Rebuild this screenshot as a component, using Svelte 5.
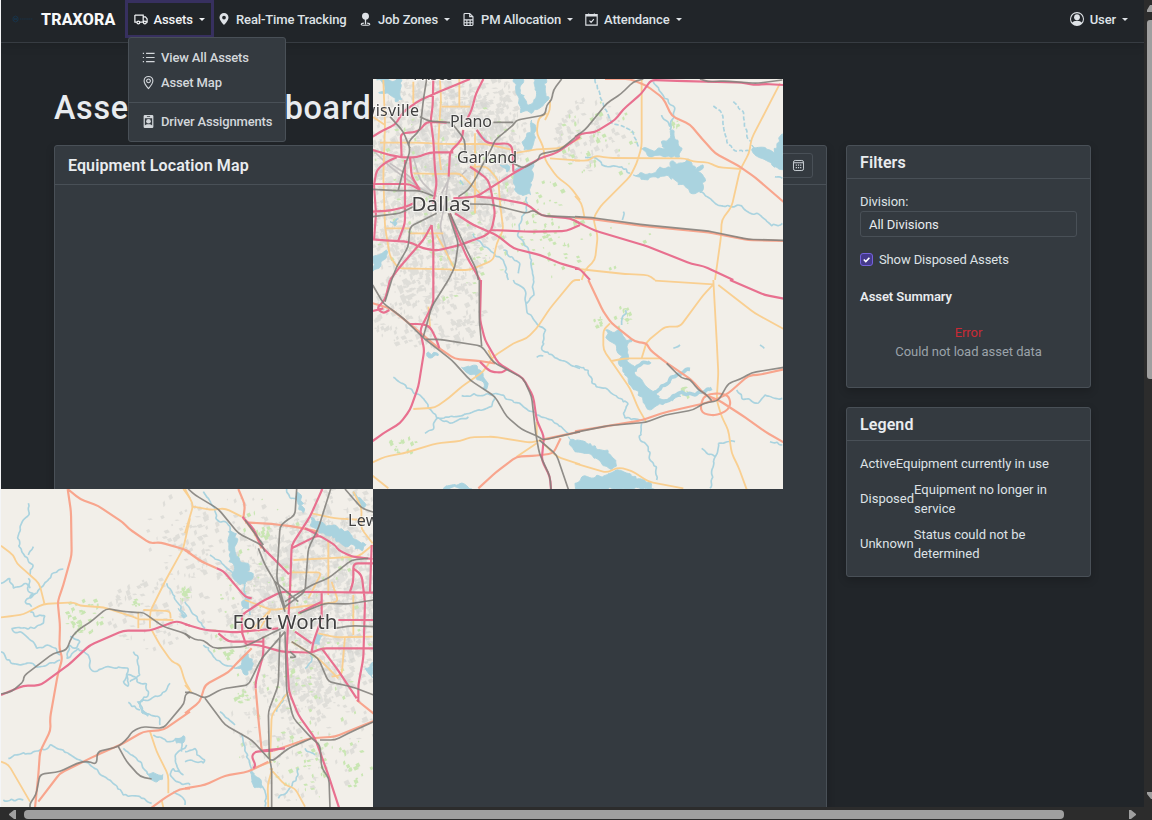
<script>
  const icons = {
    truck: 'M1 3.5h9.5v8H6.8M3.2 11.5H1v-8M10.5 5.5h2.6L15 8v3.5h-1M10.5 11.5h.3M3.4 12a1.6 1.6 0 1 0 3.2 0a1.6 1.6 0 1 0-3.2 0M10.8 12a1.6 1.6 0 1 0 3.2 0a1.6 1.6 0 1 0-3.2 0',
    list: 'M5 3h10.5M5 8h10.5M5 13h10.5M1 3h1.5M1 8h1.5M1 13h1.5',
    geo: 'M8 15.4C5 12 2.6 9 2.6 6a5.4 5.4 0 0 1 10.8 0C13.4 9 11 12 8 15.4ZM5.7 6a2.3 2.3 0 1 0 4.6 0a2.3 2.3 0 1 0-4.6 0',
    calendar: 'M1 2h14v13H1zM1 3.5h14M4.5 .5v2M11.5 .5v2M5.5 9.5l2 2 3.4-4'
  };

  const nav = [
    { id: 'track', label: 'Real-Time Tracking', caret: false },
    { id: 'job', label: 'Job Zones', caret: true },
    { id: 'pm', label: 'PM Allocation', caret: true },
    { id: 'att', label: 'Attendance', caret: true }
  ];

  const legend = [
    ['Active', ['Equipment currently in use']],
    ['Disposed', ['Equipment no longer in', 'service']],
    ['Unknown', ['Status could not be', 'determined']]
  ];

  // Each sheet is drawn at three units to the pixel from its own origin.
  const dallas = [
    {
      x: -3, y: -9,
      water: 'M20 30L98 30 90 60 97 90 75 97 60 75 25 68 45 50ZM432 27L462 27 452 60 470 100 490 100 495 60 490 27 530 27 525 60 537 80 515 110 490 125 450 130 445 100 438 70ZM485 150L497 170 485 235 462 242 455 215 470 200ZM435 300L455 295 490 278 480 340 482 375 445 372 430 340ZM8 560L50 540 40 570 10 605ZM60 455L85 445 75 470ZM390 285L420 290 410 308Z',
      stream: 'M470 380V420L455 440 445 500 470 530 485 570 490 630M310 490L340 530 360 540 400 570 415 630M400 540L450 580 445 610M325 190L370 230M270 330L280 345',
      primary: 'M130 35V100M40 30L45 160 40 320 45 470 60 560 85 595 245 598M30 218L140 218 240 222 350 222 430 240M210 27L213 90 208 160 205 230 213 300M268 27V110M215 110H300M315 190V430M130 310L210 312 270 310 330 370M300 290L350 290 385 330 390 400 400 480 380 520 370 570 300 600 240 600M200 495L225 540 255 600M530 130L505 145 500 190 520 230 525 270 560 320 600 350 630 390M430 250L500 238 570 235 630 205M540 265L630 272M45 475H120M120 490H220M8 140L45 165M540 90V120L525 150',
      trunk: '',
      motorway: 'M8 342L120 342 150 360M190 27L188 110 182 150 190 210 195 300 200 340 190 400M185 465L190 520V630M340 27L318 70 305 120 290 150M280 180L275 210 240 245 236 320M300 27L220 60 150 90 100 125 75 165 40 180 8 200M8 240L60 255 95 262 140 262 180 247 250 247M95 262L92 190 130 187 150 180 170 155 230 158M320 180L345 215 370 222 415 220 428 235 430 305M8 425L60 422 110 410 130 400M12 345L20 300 50 275 80 262M12 345L18 430 12 510M8 508L60 512 115 515 160 535 200 542 270 525 310 510 345 498 365 480 375 430 365 370 355 330 330 310 300 290M105 270V460L85 512M120 262L125 320 150 360M250 385L320 380 430 310 510 265 560 248 630 200M320 380L380 385 470 402 515 437 600 445 630 460M365 480L480 485 590 483 630 465M255 430L310 465 380 495 430 535 510 555 570 580 630 597M240 430L260 490 290 560 330 630M60 630L90 590 160 510 185 465',
      rail: 'M575 27L550 60 545 90 530 105 525 135 440 150 430 165 375 210 365 235 340 280 320 320 295 360 265 380M170 27L160 90 150 180 115 215 120 245 100 300 85 360M8 358L80 362 150 362 190 378M60 140L100 185 120 235M150 140L175 153 240 158M370 157H430M250 165L285 210V250M8 440L90 430 130 410M300 402L360 403 470 430 490 420 515 437 630 442M630 190L570 240 510 252 505 270 460 295 420 275M235 430L265 520 255 590 235 630M240 430L290 540 320 600 325 630M200 430L120 470 115 530 80 590 65 630',
      local: 'M8 240L60 290 120 335 190 378M150 360L120 320 60 280M240 320L215 370M236 320L225 400 210 470 235 560M130 262L150 330 200 380M270 320L290 300'
    },
    {
      x: 202, y: -9,
      water: 'M195 235L230 240 270 235 258 215 280 215 285 180 295 180 300 210 310 210 320 240 315 262 230 262 215 248ZM175 315L240 308 255 290 290 295 285 275 310 280 345 270 360 300 385 285 370 305 390 325 385 360 360 372 335 355 300 330 270 318 220 330ZM530 225L550 232 575 238 600 250 605 220 622 190 626 300 590 285 560 265 535 250Z',
      stream: 'M235 35L260 70 300 115 285 180M260 135L285 170M30 262H60L90 288 140 290 165 310M375 365L420 400 450 410 500 407 510 420 560 440 590 468 622 460M600 320L622 325M145 425L142 450',
      dashed: 'M60 27L75 80 110 160 170 180 190 230M415 108L440 130 455 215 480 243 525 243M475 95L505 125 515 200 530 215',
      primary: 'M200 30V230L185 280 165 320 75 410 55 445 68 500 60 570 30 600 20 630M0 272H40L60 257 100 264 330 265 355 275 400 277 430 292 500 297M615 40L530 205 522 250 495 300 470 410 440 450 438 500 420 630M0 378L20 400 28 440M10 597L150 612 220 615 240 630',
      trunk: 'M90 27H165L215 47 265 85 290 138 345 163 380 205 420 250 490 287 540 322 626 396M0 444L50 447 210 469 400 487 520 510 626 513',
      motorway: 'M0 203L20 190 60 187 120 150 145 118 200 70 228 30 320 33 500 38 540 45 570 42 626 45M0 453L60 482 220 530 350 582 385 588 475 630M0 597H15L45 630',
      rail: 'M0 200L30 180 95 100 140 70 175 35 205 27M375 27L400 35 450 33 545 40 622 30M0 440L50 443 210 465 400 483 520 508 626 511'
    },
    {
      x: -3, y: 201,
      water: 'M275 262L310 255 330 270 355 310 350 330 330 300ZM595 470L630 490 630 515 605 500ZM220 625L245 615 275 608 305 625ZM170 220L205 220 205 228 170 227Z',
      stream: 'M430 0L465 30 470 90 500 130 527 150 515 210 560 235 630 265M490 0L492 45 470 70M70 292L110 325 150 345 190 400 210 415 300 400 365 380 375 350M165 460L185 450 205 412 240 430 295 410M275 347L375 340 450 370 500 405 560 430 595 460M500 232L520 228',
      primary: 'M630 0H610L540 85 500 145 470 175 430 190 370 230 340 275 275 320 235 355 195 383 130 387M175 80L180 140M8 547L45 530 100 520 200 490 270 483 300 472 370 470 480 488 600 462M440 530L500 490M520 490L560 530 630 553M8 587L55 625M355 210L370 247M500 425V470',
      trunk: 'M8 70L60 85 130 140 200 200 255 237 330 243 375 250M325 625L380 575 440 530 500 527 550 520 572 475M520 478L630 455',
      motorway: 'M60 0L45 60 20 85 40 100 58 90M8 93L40 85M190 0V70L165 120 150 150 163 210 145 320 120 390 90 430 40 460 8 483M120 132H155L180 140 200 180 208 205M333 0L330 120 345 180 385 250 460 295 490 350 500 420 522 470 515 540 540 590 543 628M330 245L360 275 395 278 410 268',
      rail: 'M8 15L40 70 100 115 165 178 245 240 300 300 375 350 410 410 455 448 505 470 520 480 630 455M235 0L185 80 160 170M165 178H210L335 198 370 247 460 295 485 350 497 460 508 520 540 590 543 628M508 480L560 525 595 628M328 0V120L335 198M65 0L45 65'
    },
    {
      x: 202, y: 201,
      water: 'M92 150L140 155 150 175 172 185 155 200 160 225 155 240 170 255 185 290 200 298 215 320 270 360 300 345 320 350 250 375 225 390 205 370 200 350 170 320 150 280 130 250 140 230 125 200 100 180ZM0 485L20 482 50 500 100 510 125 560 110 570 60 535 40 520 0 515ZM0 610L20 590 50 595 130 570 170 590 210 600 240 628 0 628Z',
      arms: 'M180 275L200 250 225 245M225 350L250 330 300 290 345 268M260 370L310 340 360 345 410 325',
      stream: 'M0 258L40 270 50 310 100 330 130 355 160 370 145 400 150 415 210 420M200 430L195 480 220 500 225 540 245 560V600M485 330L500 355 550 370 570 345 622 355M430 490L415 560 405 625M380 505L420 530M430 490L480 485M140 135L152 90M295 205L315 195M585 485L622 495M555 195L568 205',
      primary: 'M240 2L415 13M415 0L425 180 430 280 425 360 440 410 460 450 470 520 490 560 515 628M415 13L385 45 315 140 270 140 215 185 200 235M110 243L150 235H260M105 130L85 150V210L110 245 165 325 190 385 213 425M430 15L540 100 626 147M0 550L95 578 130 562 170 572 220 605 325 625',
      trunk: 'M40 0L85 95 110 130 180 185 215 190 225 210 270 245 350 300 390 345 430 360 500 405 570 455 626 487M0 454L200 421 270 397 380 372 420 360 460 340 520 287 560 283 626 268M378 375L385 352 405 342 435 340 460 347 467 370 458 390 435 402 415 406 388 402 378 390 378 375',
      motorway: 'M465 0L570 45 626 56',
      rail: 'M0 457L100 437 212 427 270 405 355 390 385 370 430 362 460 310 495 298 530 278 626 262M275 250L320 295 345 298 370 330 390 340 410 362'
    }
  ];

  const fortWorth = [
    {
      x: -1, y: -4,
      water: 'M440 865L460 862 475 870 490 868 488 885 470 892 450 880ZM412 650L425 650 420 665 445 695 425 685ZM535 370L560 395 550 400ZM525 760L555 755 550 775 530 775Z',
      stream: 'M85 55L88 85 60 125 52 160 65 200 75 215 100 240 90 270M100 185L85 210M190 252L155 265 140 290 120 310 90 340M3 295L30 280 40 310 80 295 85 320 100 325 75 350 95 365M85 280L90 310M90 380L110 395 135 392 130 415 100 430 35 430 40 440 60 440 90 465 100 470 110 490 140 480 170 490 180 510M3 500L20 525 60 540 80 535 120 545 180 525M210 455L240 470 230 490 210 480 200 520 235 490 265 510 270 550 280 560 320 545 385 550 380 575 370 590 385 605 380 570 405 575 410 590 440 595 445 630 420 650 430 680 480 700V720M400 500L415 520 420 570 390 590M510 595L495 620 455 640 425 650M385 652L420 675M25 820L50 810 100 800 135 795 150 780 190 795 220 815 270 840 330 885 370 930 420 935 455 955M370 790L420 830 450 870M460 750L500 770 550 760 545 800M560 780L525 810 530 840 550 870 520 850 510 870 530 890 570 900M500 295L530 350 560 395M10 945H70M520 920L550 940 555 960',
      primary: 'M3 182L40 210 50 235 118 295 133 355M3 397L45 392 70 388 130 357 220 352 240 362 310 367 400 395 415 403 520 405M570 100L550 190 500 280 450 380V430M415 380V430M430 375L510 378 512 400M455 435L480 480 515 530 540 540 555 590 570 615M450 740L470 800 505 870V925M3 830L25 838 90 950M485 945L490 968M550 12L570 40',
      trunk: 'M203 12L213 80 215 210 190 300 173 350 180 420 178 490 187 520 173 570 150 700 152 735 120 800 115 870 105 968M203 12L240 42 295 63 370 113 385 130 450 175 480 172 550 192 570 202M570 680L490 735 430 740 360 780 290 810 210 850 180 865 115 950M455 968L500 935 540 912 570 910',
      motorway: 'M3 630L70 602 105 602 125 598 205 540 270 480 370 437 450 437 530 408 570 422',
      rail: 'M3 627L35 620 70 590 72 572 160 505 200 495 215 455 240 430 270 412 320 370 360 378 410 383 430 382 490 425 555 445 570 460M570 620L555 630 553 655 490 730 425 725 395 740 385 758 355 785 292 800 290 838 260 828 230 835 180 860 120 868 108 930 90 955V968M355 785L380 830 420 875 455 882'
    },
    {
      x: 184, y: -4,
      water: 'M130 140L155 145 150 200 165 230 190 235 185 260 205 265 180 300 165 300 140 270 150 250 130 230 138 200ZM375 95L400 110 430 120 470 130 500 150 545 180 530 197 500 175 480 185 440 150 420 150 380 125ZM150 550L170 540 170 520 190 505 200 530 200 555 180 570 170 550ZM335 20L350 35 355 85 340 75ZM385 480L395 445 415 450 405 480ZM195 860L225 880 230 910 205 900ZM540 550L563 530 563 580ZM170 350L195 340 190 370 170 375ZM505 20L545 60 530 65Z',
      stream: 'M55 20L90 70 92 100 130 120 145 150M75 210L110 235 150 270M180 300V350L195 390M0 350L30 390 60 430M55 480L110 535 150 550M105 680L150 720M170 750L180 790 200 860 240 920V965M300 630L275 680M0 800L30 790 35 810 60 825 55 835 20 825 0 830M280 940L310 915 340 870V850M305 12L315 40 340 50M360 550L380 530 375 510M360 790L390 810',
      primary: 'M0 12L25 60 0 145M25 65L80 75 120 70 170 95M380 85L450 100 540 105M430 165V330M325 225L520 215 563 180M320 262L410 262 370 340M505 330V450M400 445L450 457 563 455M480 455L470 570 440 575M180 345L260 375 350 365 460 350 440 290M310 620L260 690 255 830M255 850L300 900 330 910 360 965M262 850L248 900 250 968M205 850L260 830M505 20L530 70 528 130 563 175M320 470L400 520 460 580M0 600L20 622M170 440L200 435 260 370 220 440',
      trunk: 'M0 195L50 230 95 250M160 12L180 60 175 100M180 112L260 117 330 125 400 140M175 100L210 145 230 190M0 685L45 650 60 600 130 562 160 530 200 490M0 910L60 900 120 872 190 860 250 830M230 795L222 720 212 610M265 797L375 760 450 755 566 708M515 645L566 686',
      motorway: 'M412 12L375 95 320 180 315 320 310 400 305 500 312 620 340 690 390 760 430 870 462 968M172 95L205 130 230 185 275 230 312 268M320 190L400 150 450 180 460 195 500 215 563 222M360 130L400 150M95 250L115 258 180 335 200 340M172 445L170 390 230 350 290 320 566 323M0 418L60 435 150 442 280 430M100 445L130 470 235 470M183 478L220 480 290 500 380 503 410 490 566 490M170 440L183 478M235 455V510L212 590V610M410 325V400L385 470 380 500M460 405H566M495 320L505 290V235H566M505 250L530 270 540 350 535 520 520 600V650M410 490L455 550 515 640M560 180L555 320M265 797L210 800 200 815 212 840 205 850M230 797L300 790M330 440L380 475M340 385L410 350',
      rail: 'M10 12L30 30 100 72 160 145 230 180 240 200M180 105L235 180M220 190L240 240 270 290 290 350 300 380M335 12L330 90 300 110 285 125 275 280 300 370M437 12L400 130 370 190 360 320 300 365M345 385L420 355 490 357 566 345M300 350L380 300 430 280 500 225 550 220M0 445L30 465 55 465 85 490 180 485 290 430M300 440L230 520 190 600 110 612 60 640 20 622H0M285 440L280 600 250 680 253 820 260 850V968M300 440L305 620 325 700 380 760 405 780 410 850 432 880 435 968M60 640L120 720 200 765 260 830 310 790 380 760M320 470L400 520 430 590 500 605 566 630M450 430L500 422 566 425M405 765L450 765 500 740 566 710M480 12L530 70 566 82M270 290L340 350M315 500L335 517H315'
    }
  ];

  function points(d) {
    const parts = [];
    for (const sub of d.split('M').filter(Boolean)) {
      const pts = [];
      let cmd = 'L';
      let x = 0;
      let y = 0;
      const closed = sub.includes('Z');
      const tokens = sub.match(/[LHV]|-?[\d.]+/g);
      for (let i = 0; i < tokens.length; ) {
        if (/[LHV]/.test(tokens[i])) { cmd = tokens[i++]; continue; }
        if (cmd === 'H') x = +tokens[i++];
        else if (cmd === 'V') y = +tokens[i++];
        else { x = +tokens[i++]; y = +tokens[i++]; }
        pts.push([x, y]);
      }
      parts.push({ pts, closed });
    }
    return parts;
  }

  // Rounds the corners of a polyline; rough > 0 first breaks long sides into wavering steps.
  function trace(d, rough = 0) {
    if (!d) return '';
    let s = d.length * 97 + 11;
    const rnd = () => ((s = (s * 16807) % 2147483647) / 2147483647) - 0.5;
    let out = '';
    for (const { pts, closed } of points(d)) {
      let list = closed ? [...pts, pts[0]] : pts;
      if (rough) {
        const fine = [list[0]];
        for (let i = 1; i < list.length; i++) {
          const [ax, ay] = list[i - 1];
          const [bx, by] = list[i];
          const n = Math.max(1, Math.round(Math.hypot(bx - ax, by - ay) / 9));
          for (let k = 1; k < n; k++) fine.push([ax + ((bx - ax) * k) / n + rnd() * rough, ay + ((by - ay) * k) / n + rnd() * rough]);
          fine.push([bx, by]);
        }
        list = fine;
      }
      out += `M${list[0][0].toFixed(1)} ${list[0][1].toFixed(1)}`;
      for (let i = 1; i < list.length - 1; i++) {
        const [px, py] = list[i - 1];
        const [x, y] = list[i];
        const [nx, ny] = list[i + 1];
        const a = Math.min(0.4, 14 / (Math.hypot(px - x, py - y) || 1));
        const b = Math.min(0.4, 14 / (Math.hypot(nx - x, ny - y) || 1));
        out += `L${(x + (px - x) * a).toFixed(1)} ${(y + (py - y) * a).toFixed(1)}Q${x.toFixed(1)} ${y.toFixed(1)} ${(x + (nx - x) * b).toFixed(1)} ${(y + (ny - y) * b).toFixed(1)}`;
      }
      const end = list[list.length - 1];
      out += `L${end[0]} ${end[1]}${closed ? 'Z' : ''}`;
    }
    return out;
  }

  function scatter(seed, zones, sizes) {
    let s = seed;
    const rnd = () => ((s = (s * 16807) % 2147483647) / 2147483647);
    let d = '';
    for (const [cx, cy, rx, ry, n] of zones) {
      for (let i = 0; i < n; i++) {
        const a = rnd() * 6.283;
        const r = Math.pow(rnd(), 0.6);
        const x = cx + Math.cos(a) * r * rx;
        const y = cy + Math.sin(a) * r * ry;
        const w = 0.8 + rnd() * sizes;
        const h = 0.8 + rnd() * sizes;
        d += `M${x.toFixed(1)} ${y.toFixed(1)}l${w.toFixed(1)} ${(-h / 2).toFixed(1)} ${(w / 2).toFixed(1)} ${h.toFixed(1)} ${(-w).toFixed(1)} ${(h / 2).toFixed(1)}z`;
      }
    }
    return d;
  }

  const tiles = [
    {
      cls: 'north', w: 410, h: 410, sheets: dallas,
      urban: scatter(71, [[65, 95, 80, 110, 950], [55, 150, 60, 75, 350], [110, 60, 45, 65, 260], [50, 230, 60, 40, 230], [215, 55, 35, 38, 90]], 4),
      core: scatter(19, [[65, 85, 65, 90, 330]], 8),
      green: scatter(33, [[75, 120, 90, 100, 130], [170, 150, 35, 50, 55], [225, 60, 45, 40, 45], [220, 165, 60, 30, 18], [245, 240, 12, 12, 10], [300, 45, 4, 5, 8], [310, 314, 5, 7, 14], [223, 242, 4, 8, 9], [252, 236, 4, 8, 9], [30, 365, 16, 10, 16]], 3),
      labels: [
        ['Frisco', 40, 1, 16, 41], ['Lewisville', -28, 37, 16, 74], ['Plano', 77, 48, 16, 42],
        ['Garland', 84, 84, 16, 60], ['Dallas', 38.5, 132, 20.5, 59]
      ]
    },
    {
      cls: 'south', w: 372, h: 318, sheets: fortWorth,
      urban: scatter(91, [[300, 125, 75, 100, 800], [340, 60, 60, 70, 300], [225, 80, 60, 80, 150], [145, 125, 40, 35, 70], [305, 225, 75, 90, 260], [175, 50, 35, 50, 45]], 4),
      core: scatter(41, [[310, 115, 65, 95, 260]], 8),
      green: scatter(57, [[290, 150, 80, 160, 140], [80, 125, 22, 20, 32], [78, 137, 6, 6, 12], [135, 115, 8, 5, 6], [182, 104, 5, 7, 16], [260, 43, 11, 6, 22], [240, 207, 6, 7, 14], [225, 165, 5, 5, 8], [320, 275, 50, 35, 50]], 3),
      labels: [['Lewisville', 347, 37, 16, 74], ['Fort Worth', 231.5, 140, 20.5, 105]]
    }
  ];
</script>

{#snippet icon(name)}
  <svg class="icon" viewBox="0 0 16 16" aria-hidden="true">
    {#if name === 'track'}
      <path class="solid" fill-rule="evenodd" d="M8 16s6-5.700 6-10A6 6 0 0 0 2 6c0 4.300 6 10 6 10m0-7.500a2.500 2.500 0 1 1 0-5 2.500 2.500 0 0 1 0 5" />
    {:else if name === 'job'}
      <path class="solid" d="M3.700 4a4.300 4.300 0 1 1 5.100 4.200V14H7.200V8.200A4.300 4.300 0 0 1 3.700 4" />
      <path d="M6 12.500c-2.300.2-3.300.5-3.300 1.200 0 1 2.300 1.400 5.300 1.400s5.300-.4 5.300-1.400c0-.7-1-1-3.300-1.200" />
    {:else if name === 'pm'}
      <path d="M9.500.6H3.600A1.100 1.100 0 0 0 2.500 1.700v12.600a1.100 1.100 0 0 0 1.100 1.100h8.800a1.100 1.100 0 0 0 1.100-1.100V4.500zM9.500.6v3.900h4M2.500 8.500h11M2.500 12h11M6 8.500v7M10 8.500v7" />
    {:else if name === 'user'}
      <path class="solid" d="M11.300 6a3.300 3.300 0 1 1-6.600 0 3.300 3.300 0 0 1 6.600 0" />
      <path class="solid" fill-rule="evenodd" d="M0 8a8 8 0 1 1 16 0A8 8 0 0 1 0 8m8-6.700a6.700 6.700 0 0 0-5.300 10.800C3.500 11 4.900 10 8 10s4.500 1 5.300 2.100A6.700 6.700 0 0 0 8 1.300" />
    {:else if name === 'badge'}
      <path class="solid" fill-rule="evenodd" d="M3.500 0h9A1.500 1.500 0 0 1 14 1.500v13a1.500 1.500 0 0 1-1.500 1.500h-9A1.500 1.500 0 0 1 2 14.500v-13A1.500 1.500 0 0 1 3.500 0M6 1.500v1h4v-1zM3.500 4v8.800C4.400 11.800 5.500 11.300 8 11.300s3.600.5 4.500 1.500V4z" />
      <circle class="solid" cx="8" cy="7.700" r="2.900" />
    {:else if name === 'dates'}
      <rect x="0.700" y="0.700" width="14.600" height="14.600" rx="2.500" />
      <path d="M1 4h14M4 7.500h1.700M7.200 7.500h1.700M10.400 7.500h1.700M4 11h1.700M7.200 11h1.700M10.400 11h1.700" stroke-width="1.700" />
    {:else}
      <path d={icons[name === 'att' ? 'calendar' : name]} />
    {/if}
  </svg>
{/snippet}

<div class="window">
  <div class="frame">
    <div class="page">
      <nav>
        <svg class="logo" viewBox="0 0 22 8" aria-hidden="true">
          <path d="M3.500 1L6 2.500v3L3.500 7 1 5.500v-3zM1 2.500l5 3M6 2.500l-5 3" />
          <path d="M8 4h13" stroke-dasharray="1.500 .6" />
        </svg>
        <strong class="brand">TRAXORA</strong>
        <div class="assets">
          <a class="item" href="#assets">{@render icon('truck')}<span class="txt">Assets</span><i class="caret"></i></a>
          <div class="menu">
            <a href="#all">{@render icon('list')}<span>View All Assets</span></a>
            <a href="#map">{@render icon('geo')}<span>Asset Map</span></a>
            <hr />
            <a href="#drivers">{@render icon('badge')}<span>Driver Assignments</span></a>
          </div>
        </div>
        {#each nav as n}
          <a class="item {n.id}" href="#{n.id}">{@render icon(n.id)}<span class="txt">{n.label}</span>{#if n.caret}<i class="caret"></i>{/if}</a>
        {/each}
        <a class="item user" href="#user">{@render icon('user')}<span class="txt">User</span><i class="caret"></i></a>
      </nav>

      <main>
        <h1>Asset<span class="tight"> Map Dash</span>board</h1>
        <div class="columns">
          <section class="card map">
            <header><h2>Equipment Location Map</h2><button aria-label="Dates">{@render icon('dates')}</button></header>
          </section>
          <aside>
            <section class="card filters">
              <header><h2>Filters</h2></header>
              <div class="body">
                <div class="label">Division:</div>
                <div class="select">All Divisions</div>
                <div class="check">
                  <svg viewBox="0 0 13 13" aria-hidden="true"><rect x=".5" y=".5" width="12" height="12" rx="2.500" /><path d="M3.800 6.500l2 2 3.600-3.700" /></svg>
                  <span>Show Disposed Assets</span>
                </div>
                <h3>Asset Summary</h3>
                <div class="error"><b>Error</b><span>Could not load asset data</span></div>
              </div>
            </section>
            <section class="card legend">
              <header><h2>Legend</h2></header>
              <div class="body">
                {#each legend as [name, lines]}
                  <div class="row"><span class="key">{name}</span><div>{#each lines as l}<div>{l}</div>{/each}</div></div>
                {/each}
              </div>
            </section>
          </aside>
        </div>
      </main>

      {#each tiles as t}
        <svg class="tile {t.cls}" width={t.w} height={t.h} viewBox="0 0 {t.w} {t.h}">
          <rect class="land" width={t.w} height={t.h} />
          <g class="art">
            <path class="core" d={t.core} />
            <path class="urban" d={t.urban} />
            <path class="green" d={t.green} />
            {#each t.sheets as s}
              <g transform="translate({s.x} {s.y}) scale(0.33333)">
                <path class="water" d={trace(s.water, 14)} />
                {#if s.arms}<path class="stream arm" d={trace(s.arms, 10)} />{/if}
                <path class="stream" d={trace(s.stream, 9)} />
                {#if s.dashed}<path class="stream dashed" d={trace(s.dashed, 6)} />{/if}
                {#if s.local}<path class="local" d={trace(s.local)} />{/if}
                <path class="primary" d={trace(s.primary)} />
                <path class="trunk" d={trace(s.trunk)} />
                <path class="motorway" d={trace(s.motorway)} />
                <path class="rail" d={trace(s.rail)} />
              </g>
            {/each}
            {#each t.labels as [name, x, y, size, len]}
              <text {x} {y} font-size={size} textLength={len}>{name}</text>
            {/each}
          </g>
        </svg>
      {/each}
    </div>
    <div class="vbar">
      <svg width="8" height="807" viewBox="0 0 8 807" aria-hidden="true">
        <path d="M3 12V10L6 5H8V12ZM3 792H8V799H7L3 794Z" />
        <path d="M3 23a3 3 0 0 1 3-3H8V379H6a3 3 0 0 1-3-3Z" />
      </svg>
    </div>
  </div>
  <div class="hbar">
    <svg width="1152" height="13" viewBox="0 0 1152 13" aria-hidden="true">
      <path d="M16 3V12H14L9 8V7L14 3ZM1129 3H1131L1136 7V8L1131 12H1129Z" />
      <rect x="24" y="3" width="1040" height="9" rx="4" />
    </svg>
  </div>
</div>

<style>
  :global(body) { margin: 0; background: #2c2c2c; overflow: hidden; }
  * { box-sizing: border-box; }
  .window { width: 1152px; height: 820px; display: flex; flex-direction: column; overflow: hidden; font: 13px/19.5px Roboto, "Noto Sans", sans-serif; color: #dee2e6; background: #2c2c2c; }
  .frame { display: flex; height: 807px; }
  .page { position: relative; width: 1144px; height: 807px; overflow: hidden; border-left: 1px solid #f4f5f7; background: #212529; }
  .vbar { width: 8px; }
  .hbar { height: 13px; }
  .vbar svg, .hbar svg { display: block; fill: #9f9f9f; }
  a { color: inherit; text-decoration: none; }
  .icon { width: 13px; height: 13px; flex: none; fill: none; stroke: currentColor; stroke-width: 1.4; overflow: visible; }
  .icon .solid { fill: currentColor; stroke: none; }

  nav { height: 43px; display: flex; border-bottom: 1px solid #373c42; box-shadow: 0 2px 10px #0002; font-weight: 500; letter-spacing: -.12px; }
  .logo { width: 22px; height: 8px; margin: 15px 0 0 11px; fill: none; stroke: #17364f; stroke-width: .8; }
  .brand { width: 84px; margin-left: 7px; padding-top: 10px; font-size: 16px; font-weight: 800; color: #f8f9fa; letter-spacing: .15px; }
  .assets { position: relative; width: 89px; height: 38px; border: 3px solid #37305f; margin-right: 4px; color: #f1f3f5; }
  .item { display: flex; align-items: center; height: 38px; white-space: nowrap; }
  .assets .item { height: 32px; padding-left: 6px; }
  .item .txt { margin-left: 6px; padding-top: 1px; }
  .assets .icon { width: 14px; height: 14px; }
  .assets .txt { margin-left: 5.500px; }
  .caret { width: 0; height: 0; margin-left: 6px; border: 3px solid transparent; border-top-color: currentColor; border-bottom: 0; }
  .track { width: 142px; }
  .track .icon { width: 12px; height: 14px; }
  .job { width: 103px; }
  .job .icon { margin-left: -1px; }
  .pm { width: 122px; }
  .pm .icon { margin-left: -1px; }
  .user { margin-left: auto; margin-right: 16px; }
  .user .icon { width: 14px; height: 14px; }
  .menu { position: absolute; z-index: 5; left: 0; top: 34px; width: 158px; height: 105px; padding-top: 7px; background: #343a40; border: 1px solid #495057; border-radius: 3px; color: #d3d7db; letter-spacing: -.15px; }
  .menu a { display: flex; align-items: center; height: 25px; padding-left: 13px; white-space: nowrap; }
  .menu .icon { width: 13px; height: 13px; margin-right: 6px; }
  .menu hr { margin: 7px 0 6px; border: 0; border-top: 1px solid #495057; }

  main { padding: 46px 53px 0; }
  h1, h2, h3 { margin: 0; }
  h1 { height: 56px; font-size: 32.300px; line-height: 38px; font-weight: 500; color: #e9ecef; letter-spacing: .7px; white-space: nowrap; }
  .tight { letter-spacing: -.050px; }
  .columns { display: flex; gap: 19px; align-items: flex-start; }
  .card { background: #343a40; border: 1px solid #495057; border-radius: 3px; box-shadow: 0 3px 8px #0003; }
  .card header { display: flex; align-items: center; justify-content: space-between; height: 33px; padding: 0 13px; border-bottom: 1px solid #495057; }
  h2 { padding-top: 2px; font-size: 16px; font-weight: 600; color: #e9ecef; letter-spacing: .1px; }
  .map { width: 773px; height: 720px; }
  .map header { height: 39px; }
  button { width: 74px; height: 25px; display: flex; align-items: center; justify-content: flex-end; padding: 0 8px 0 0; background: none; border: 1px solid #495057; border-radius: 3px; color: #ced4da; }
  button .icon { width: 11px; height: 11px; }
  aside { width: 245px; display: flex; flex-direction: column; gap: 19px; }
  .body { padding: 13px; }
  .filters { height: 243px; letter-spacing: -.05px; }
  .label { height: 19px; }
  .select { height: 26px; margin-bottom: 12.500px; padding: 2.500px 8px; width: 217px; border: 1px solid #495057; border-radius: 3px; color: #e9ecef; }
  .check { display: flex; align-items: center; gap: 6px; letter-spacing: -.13px; }
  .check svg { width: 13px; height: 13px; fill: #453a8c; stroke: #7562dc; }
  .check path { fill: none; stroke: #fff; stroke-width: 1.6; }
  h3 { margin-top: 18px; font-size: 13px; font-weight: 600; color: #e9ecef; }
  .error { display: flex; flex-direction: column; align-items: center; margin-top: 16px; color: #9ba3aa; }
  .error b { font-weight: 400; color: #c92a35; }
  .legend { height: 170px; }
  .row { display: flex; align-items: center; margin-bottom: 6px; white-space: nowrap; }

  .tile { position: absolute; overflow: hidden; }
  .north { left: 372px; top: 79px; }
  .south { left: 0; top: 489px; }
  .land { fill: #f2efe9; }
  .art { filter: blur(.4px); }
  .core { fill: #dcdcd8; opacity: .75; }
  .urban { fill: #cfcfcc; opacity: .55; }
  .green { fill: #c9e6b3; }
  .water { fill: #aad3df; stroke: #aad3df; stroke-width: 3; stroke-linejoin: round; }
  .stream, .primary, .trunk, .motorway, .rail, .local { fill: none; stroke-linejoin: round; }
  .stream { stroke: #aad3df; stroke-width: 5; }
  .arm { stroke-width: 11; }
  .dashed { stroke-dasharray: 13 6; }
  .local { stroke: #c5c1c1; stroke-width: 5; }
  .primary { stroke: #f9cf91; stroke-width: 5.500; }
  .trunk { stroke: #f8a58d; stroke-width: 6.500; }
  .motorway { stroke: #e8708f; stroke-width: 6.500; }
  .rail { stroke: #827f7b; stroke-width: 5; opacity: .88; }
  text { font-family: "Noto Sans", sans-serif; fill: #404040; stroke: #fff9; stroke-width: 2; paint-order: stroke; }
</style>
